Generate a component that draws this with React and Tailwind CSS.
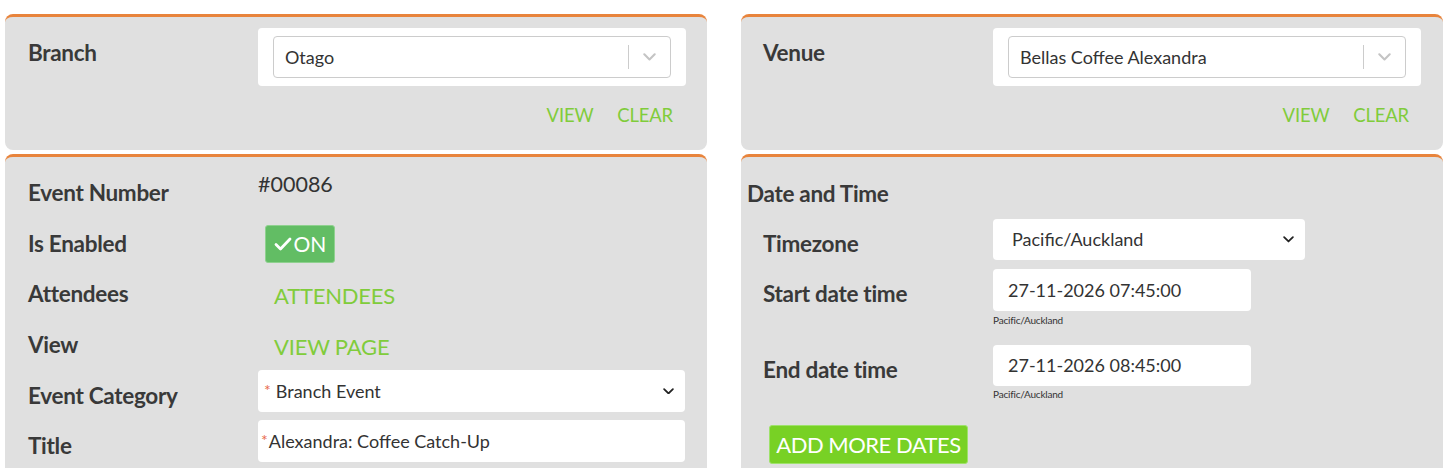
import React from "react";

const font = { fontFamily: "Lato, 'Noto Sans', sans-serif" };

function Chevron({ className = "", color = "#333", w = 12 }) {
  return (
    <svg width={w} height={w * 0.6} viewBox="0 0 10 6" className={className}>
      <path d="M1 1l4 4 4-4" fill="none" stroke={color} strokeWidth="1.6" strokeLinecap="round" strokeLinejoin="round" />
    </svg>
  );
}

function ReactSelect({ value }) {
  return (
    <div className="bg-white rounded-[4px] px-[15px] py-[8px] w-[428px]">
      <div className="h-[42px] border border-[#cccccc] rounded-[4px] flex items-center pl-[11px] pr-[14px]">
        <span className="flex-1 text-[18px] text-[#333]">{value}</span>
        <span className="w-px h-[24px] bg-[#cccccc] mr-[14px]" />
        <Chevron color="#c4c4c4" w={13} />
      </div>
    </div>
  );
}

function Label({ children, className = "" }) {
  return <div className={`font-bold text-[22.5px] text-[#393939] tracking-[-0.3px] ${className}`}>{children}</div>;
}

function Link({ children, big }) {
  return (
    <span className={`${big ? "text-[22px]" : "text-[18.5px]"} text-[#80cc3b] tracking-[-0.2px]`}>{children}</span>
  );
}

function Panel({ children, className = "" }) {
  return (
    <div className={`bg-[#e0e0e0] rounded-[8px] border-t-[3px] border-[#e8843c] ${className}`}>{children}</div>
  );
}

export default function App() {
  return (
    <div style={font} className="w-[1447px] h-[468px] overflow-hidden bg-white flex items-start gap-[34px] pl-[5px] pt-[14px]">
      {/* Left column */}
      <div className="w-[702px] flex flex-col gap-[4px]">
        <Panel className="shrink-0 h-[136px] pt-[11px] pl-[23px] pr-[21px]">
          <div className="flex items-start">
            <Label className="w-[230px] pt-[8px]">Branch</Label>
            <ReactSelect value="Otago" />
          </div>
          <div className="flex justify-end gap-[24px] pr-[13px] mt-[16px]">
            <Link>VIEW</Link>
            <Link>CLEAR</Link>
          </div>
        </Panel>
        <Panel className="shrink-0 h-[330px] pt-[11px] pl-[23px] pr-[22px]">
          <div className="flex h-[50px] items-center">
            <Label className="w-[230px]">Event Number</Label>
            <div className="self-start text-[21.5px] text-[#333]">#00086</div>
          </div>
          <div className="flex h-[51px] items-center">
            <Label className="w-[230px]">Is Enabled</Label>
            <div className="ml-[7px] h-[38px] w-[70px] rounded-[3px] bg-[#62bd64] border border-[#8fd18f] flex items-center justify-center gap-[2px] text-white text-[21px]">
              <svg width="18" height="14" viewBox="0 0 18 14">
                <path d="M2 7.5l4.5 4.5L16 2" fill="none" stroke="white" strokeWidth="2.8" strokeLinecap="round" strokeLinejoin="round" />
              </svg>
              <span>ON</span>
            </div>
          </div>
          <div className="flex h-[50px] items-center">
            <Label className="w-[230px]">Attendees</Label>
            <div className="ml-[16px] mt-[3px]"><Link big>ATTENDEES</Link></div>
          </div>
          <div className="flex h-[51px] items-center">
            <Label className="w-[230px]">View</Label>
            <div className="ml-[16px] mt-[3px]"><Link big>VIEW PAGE</Link></div>
          </div>
          <div className="flex h-[50px] items-center">
            <Label className="w-[230px] mt-[2px]">Event Category</Label>
            <div className="self-start h-[42px] w-[427px] bg-white rounded-[4px] flex items-center pl-[6px] pr-[11px] text-[18px] text-[#333]">
              <span className="text-[#e8694a] text-[16px] self-start mt-[8px] mr-[5px]">*</span>
              <span className="flex-1">Branch Event</span>
              <Chevron w={11} color="#222" />
            </div>
          </div>
          <div className="flex h-[50px] items-center">
            <Label className="w-[230px] mt-[2px]">Title</Label>
            <div className="self-start h-[42px] w-[427px] bg-white rounded-[4px] flex items-center pl-[3px] text-[18px] text-[#333]">
              <span className="text-[#e8694a] text-[16px] self-start mt-[8px] mr-[1px]">*</span>
              <span>Alexandra: Coffee Catch-Up</span>
            </div>
          </div>
        </Panel>
      </div>

      {/* Right column */}
      <div className="w-[702px] flex flex-col gap-[4px]">
        <Panel className="shrink-0 h-[136px] pt-[11px] pl-[22px] pr-[22px]">
          <div className="flex items-start">
            <Label className="w-[230px] pt-[8px]">Venue</Label>
            <ReactSelect value="Bellas Coffee Alexandra" />
          </div>
          <div className="flex justify-end gap-[24px] pr-[12px] mt-[16px]">
            <Link>VIEW</Link>
            <Link>CLEAR</Link>
          </div>
        </Panel>
        <Panel className="shrink-0 h-[330px] pt-[11px] pl-[6px]">
          <div className="h-[51px] flex items-center">
            <Label>Date and Time</Label>
          </div>
          <div className="flex items-start pl-[16px]">
            <Label className="w-[230px] h-[50px] flex items-center">Timezone</Label>
            <div className="h-[41px] w-[312px] bg-white rounded-[4px] flex items-center pl-[19px] pr-[11px] text-[18px] text-[#333]">
              <span className="flex-1">Pacific/Auckland</span>
              <Chevron w={11} color="#222" />
            </div>
          </div>
          <div className="flex items-start pl-[16px]">
            <Label className="w-[230px] h-[50px] flex items-center">Start date time</Label>
            <div className="flex flex-col">
              <div className="h-[42px] w-[258px] bg-white rounded-[4px] flex items-center pl-[15px] text-[18px] text-[#333]">
                27-11-2026 07:45:00
              </div>
              <div className="text-[10px] leading-[18px] text-[#333] h-[34px] tracking-[-0.2px]">Pacific/Auckland</div>
            </div>
          </div>
          <div className="flex items-start pl-[16px]">
            <Label className="w-[230px] h-[50px] flex items-center">End date time</Label>
            <div className="flex flex-col">
              <div className="h-[41px] w-[258px] bg-white rounded-[4px] flex items-center pl-[15px] text-[18px] text-[#333]">
                27-11-2026 08:45:00
              </div>
              <div className="text-[10px] leading-[16px] text-[#333] h-[39px] tracking-[-0.2px]">Pacific/Auckland</div>
            </div>
          </div>
          <div className="pl-[22px]">
            <div className="h-[39px] w-[199px] bg-[#78d125] border border-[#9ee26a] rounded-[3px] flex items-center justify-center text-white text-[22px] tracking-[-0.5px]">
              ADD MORE DATES
            </div>
          </div>
        </Panel>
      </div>
    </div>
  );
}
